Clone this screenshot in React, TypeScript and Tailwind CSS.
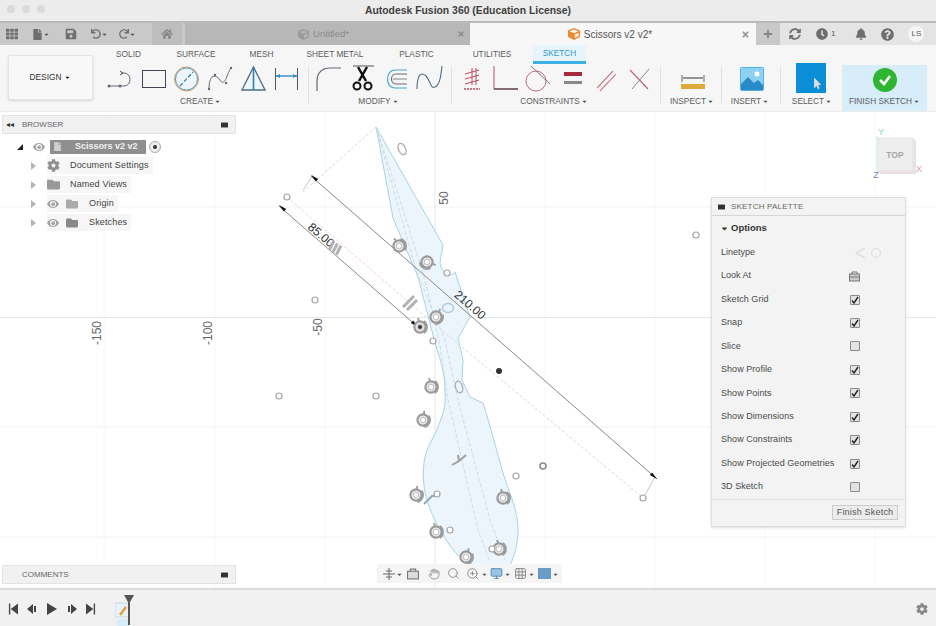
import React from "react";
import { FaTh, FaFile, FaSave, FaHome, FaPlus, FaBell, FaQuestionCircle, FaEye, FaCog, FaFolder, FaCube, FaTimes, FaMousePointer, FaClock, FaUndo, FaRedo, FaSyncAlt, FaCaretDown } from "react-icons/fa";
import { Hand, Search, ZoomIn, Monitor, Grid3x3 } from "lucide-react";

const F = "font-['Liberation_Sans',Arial,sans-serif]";
const Caret = ({ c = "text-[#555]" }: { c?: string }) => <FaCaretDown className={`inline ${c}`} size={7} />;

const I = ({ w = 28, ml = 0, children }: { w?: number; ml?: number; children: React.ReactNode }) => (
  <svg width={w} height={28} viewBox={`0 0 ${w} 28`} fill="none" className="shrink-0" style={{ marginLeft: ml }}>{children}</svg>
);

function Ring({ x, y, r = 0 }: { x: number; y: number; r?: number }) {
  return (
    <g transform={`translate(${x} ${y}) rotate(${r})`} stroke="#9a9a9a" fill="none">
      <circle r="5.6" strokeWidth="2.2" fill="#f2f2f2" />
      <circle r="2.8" strokeWidth="1.2" stroke="#c4c4c4" fill="#fff" />
      <path d="M3.8 -6.2 A7.5 7.5 0 0 1 3.8 6.2" strokeWidth="1.6" />
      <path d="M-2 -9 L-1 -6" strokeWidth="1.8" />
    </g>
  );
}
const Pt = ({ x, y, c = "#a5a5a5" }: { x: number; y: number; c?: string }) => <circle cx={x} cy={y} r="3" fill="#fff" stroke={c} strokeWidth="1.2" />;
const Arrow = ({ x, y, r }: { x: number; y: number; r: number }) => <path transform={`translate(${x} ${y}) rotate(${r})`} d="M0 0L8 -1.8L8 1.8Z" fill="#111" />;

function Canvas() {
  const outline = "M376 127 L443 245 L440 263 C442 275 452 277 455 272 L470 317 L458 338 L463 360 L462 380 L470 397 L483 403 C490 425 497 452 503 473 C510 495 518 510 518 530 C518 545 514 556 510 566 L470 566 L460 557 C450 548 435 525 428 503 C423 490 422 470 425 457 C428 445 434 437 438 427 C444 412 446 405 445 392 C445 378 443 367 435 343 L418 277 L393 218 Z";
  return (
    <svg className="absolute inset-0" width="936" height="476" viewBox="0 112 936 476">
      <g strokeWidth="1">
        {[104, 215, 325, 545, 655, 765, 875].map((x) => <path key={x} d={`M${x} 112V588`} stroke="#f8f8f8" />)}
        {[207, 427, 537].map((y) => <path key={y} d={`M0 ${y}H936`} stroke="#f3f3f3" />)}
        <path d="M435 112V588M0 317.5H936" stroke="#e6e6e6" />
      </g>
      <path d={outline} fill="#ebf5fb" stroke="#a6d4e6" strokeWidth="1" />
      <g fill="none" stroke="#c8d6dd" strokeWidth="0.8" strokeDasharray="4 2">
        <path d="M376 127 L416 270 L445 340 L458 400 L490 520 L505 560" />
        <path d="M376 127 L400 200 L425 280 L440 345 L448 400 L478 530 L490 562" />
      </g>
      <g fill="none" stroke="#d4d4d4" strokeWidth="0.9" strokeDasharray="3 2">
        <path d="M376 127 L303 192" />
        <path d="M287 197 L420 312" stroke="#f0caca" />
        <path d="M420 312 L643 498" />
      </g>
      <path d="M303 190L313 175M655 477L645 495" stroke="#c9c9c9" fill="none" />
      <g stroke="#8a8a8a" strokeWidth="1" fill="none">
        <path d="M311 176 L657 479" />
        <path d="M279 206 L418 327" />
      </g>
      <Arrow x={311} y={175} r={41} />
      <Arrow x={657} y={479} r={221} />
      <Arrow x={279} y={205} r={41} />
      <Arrow x={418} y={327} r={221} />
      <text x="321" y="239" fontSize="12" fontFamily="Liberation Sans" fill="#333" transform="rotate(41 321 235)" textAnchor="middle">85.00</text>
      <text x="470" y="309" fontSize="12" fontFamily="Liberation Sans" fill="#333" transform="rotate(41 470 305)" textAnchor="middle">210.00</text>
      {[[97, 333, "-150"], [208, 333, "-100"], [318, 327, "-50"], [444, 198, "50"]].map(([x, y, t]) => (
        <text key={String(t)} x={Number(x) + 4} y={y as number} fontSize="12" fontFamily="Liberation Sans" fill="#666" textAnchor="middle" transform={`rotate(-90 ${Number(x) + 4} ${y})`}>{t}</text>
      ))}
      <g fill="none" stroke="#adadad" strokeWidth="1.4">
        <ellipse cx="402" cy="149" rx="3.5" ry="6" transform="rotate(-25 402 149)" />
        <ellipse cx="459" cy="387" rx="3.5" ry="6" transform="rotate(-15 459 387)" />
        <ellipse cx="448" cy="308" rx="5.5" ry="4.5" stroke="#a6cde0" />
      </g>
      <g stroke="#b2b2b2" strokeWidth="3" fill="none">
        <path d="M328 246 L336 252 M331 243 L339 249 M334 240 L342 246" transform="rotate(80 334 247)" />
        <path d="M403 307 L414 296 M407 310 L417 300" />
      </g>
      <path d="M452 465 L459 461 L458 455 M459 461 L466 455" stroke="#a0a0a0" strokeWidth="2" fill="none" />
      <path d="M424 504 L432 496 L435 496" stroke="#8fa9bb" strokeWidth="2" fill="none" />
      <Ring x={399} y={246} r={-20} />
      <Ring x={427} y={262} r={120} />
      <Ring x={436} y={317} r={40} />
      <Ring x={420} y={327} r={0} />
      <circle cx="420" cy="327" r="2" fill="#333" />
      <Ring x={431} y={387} r={0} />
      <Ring x={423} y={420} r={20} />
      <Ring x={416} y={495} r={20} />
      <Ring x={503} y={498} r={0} />
      <Ring x={436} y={532} r={0} />
      <Ring x={466} y={557} r={30} />
      <Ring x={499} y={549} r={0} />
      {[[287, 197], [315, 300], [279, 396], [376, 396], [696, 235], [447, 273], [433, 341], [516, 476], [643, 498], [437, 494], [450, 530], [492, 549]].map(([x, y]) => <Pt key={`${x}-${y}`} x={x} y={y} />)}
      <circle cx="543" cy="466" r="3" fill="#fff" stroke="#888" strokeWidth="1.6" />
      <circle cx="499" cy="371" r="3" fill="#333" />
      {/* view cube */}
      <path d="M913 138L916 141V174H881L878 171H913Z" fill="#e4e4e4" />
      <path d="M878 138H913V171H878Z" fill="#eeeeee" stroke="#e4e4e4" />
      <text x="895" y="158" fontSize="8.5" fontWeight="700" fontFamily="Liberation Sans" fill="#a6a6a6" textAnchor="middle">TOP</text>
      <path d="M877 136V171" stroke="#d3efe2" strokeWidth="1.2" />
      <path d="M877 172H919" stroke="#f3dcdc" strokeWidth="1.2" />
      <text x="881" y="135" fontSize="9" fontFamily="Liberation Sans" fill="#8ad6b4" textAnchor="middle">Y</text>
      <text x="876" y="178" fontSize="9" fontFamily="Liberation Sans" fill="#6f7fd0" textAnchor="middle">Z</text>
      <text x="919" y="172" fontSize="9" fontFamily="Liberation Sans" fill="#e0a0aa" textAnchor="middle">X</text>
    </svg>
  );
}

const Grip = () => <span className="block w-[7px] h-[6px] rounded-[1px] bg-[#333] border-y border-[#999] shrink-0" />;

function TreeRow({ eye, icon, label, indent }: { eye?: boolean; icon: React.ReactNode; label: string; indent: number }) {
  return (
    <div className="flex items-center h-[19px]">
      <span className="w-0 h-0 ml-[31px] border-y-[4px] border-y-transparent border-l-[5px] border-l-[#b4b4b4]" />
      <div className="flex items-center ml-[11px] h-[17px] bg-[#f6f6f6] pr-[4px]">
        {eye ? <FaEye size={12} className="text-[#a4a4a4] mr-[7px]" /> : null}
        {icon}
        <span className="text-[9px] text-[#444] tracking-[0.15px]" style={{ marginLeft: indent }}>{label}</span>
      </div>
    </div>
  );
}

function Check({ on }: { on?: boolean }) {
  return (
    <span className="w-[10px] h-[10px] border border-[#8a8a8a] bg-[#e2e2e2] rounded-[1px] flex items-center justify-center">
      {on ? <svg width="8" height="8" viewBox="0 0 8 8"><path d="M1 4.5L3 7L7 1" stroke="#222" strokeWidth="1.4" fill="none" /></svg> : null}
    </span>
  );
}

function Palette() {
  const rows: [string, boolean][] = [["Sketch Grid", true], ["Snap", true], ["Slice", false], ["Show Profile", true], ["Show Points", true], ["Show Dimensions", true], ["Show Constraints", true], ["Show Projected Geometries", true], ["3D Sketch", false]];
  return (
    <div className="absolute left-[711px] top-[85px] w-[195px] h-[330px] bg-[#f3f3f3] border border-[#dedede] shadow-sm flex flex-col text-[#4a4a4a]">
      <div className="h-[18px] flex items-center pl-[6px] border-b border-[#d5d5d5] shrink-0">
        <Grip />
        <span className="ml-[6px] text-[8px] text-[#666] tracking-[0.2px]">SKETCH PALETTE</span>
      </div>
      <div className="h-[25px] flex items-center pl-[8px] shrink-0">
        <FaCaretDown size={9} className="text-[#333]" />
        <span className="ml-[2px] text-[9.5px] font-bold text-[#333]">Options</span>
      </div>
      <div className="flex flex-col pl-[9px]">
        <div className="h-[23.45px] flex items-center justify-between pr-[24px]">
          <span className="text-[9px]">Linetype</span>
          <span className="flex items-center gap-[5px]">
            <svg width="11" height="12" viewBox="0 0 11 12"><path d="M10 1L1 6L10 11" fill="none" stroke="#ddd" strokeWidth="1.4" /></svg>
            <span className="w-[10px] h-[10px] rounded-full border border-[#ddd]" />
          </span>
        </div>
        <div className="h-[23.45px] flex items-center justify-between pr-[45px]">
          <span className="text-[9px]">Look At</span>
          <svg width="11" height="11" viewBox="0 0 11 11"><rect x="0.5" y="3" width="10" height="7" fill="#ccc" stroke="#777" /><path d="M3 3V1H8V3M1 6H10" stroke="#777" fill="none" /></svg>
        </div>
        {rows.map(([t, on]) => (
          <div key={t} className="h-[23.45px] flex items-center justify-between pr-[45px]">
            <span className="text-[9px] tracking-[0.05px] whitespace-nowrap">{t}</span>
            <Check on={on} />
          </div>
        ))}
      </div>
      <div className="mt-auto h-[27px] border-t border-[#e2e2e2] flex items-center justify-end pr-[7px] pb-[1px]">
        <span className="h-[15px] w-[66px] border border-[#ccc] bg-[#ececec] flex items-center justify-center text-[9px] text-[#555] tracking-[0.2px]">Finish Sketch</span>
      </div>
    </div>
  );
}

function Group({ w, label, children, shift = 0 }: { w: number; label: string; children: React.ReactNode; shift?: number }) {
  return (
    <div className="flex flex-col items-center shrink-0" style={{ width: w }}>
      <div className="h-[28px] flex items-center justify-center">{children}</div>
      <div className="mt-[2px] text-[8.3px] text-[#5c5c5c] h-[12px] leading-[12px] whitespace-nowrap flex items-center gap-[1px]" style={{ marginRight: shift }}>{label}<Caret /></div>
    </div>
  );
}
const Sep = () => <div className="w-px h-[36px] mt-[2px] bg-[#e0e0e0] shrink-0" />;

function Toolbar() {
  const tabs: [string, number][] = [["SOLID", 57], ["SURFACE", 78], ["MESH", 53], ["SHEET METAL", 94], ["PLASTIC", 69], ["UTILITIES", 82]];
  return (
    <div className="h-[67px] bg-[#f6f6f6] flex shrink-0 border-b border-[#ececec]">
      <div className="w-[85px] h-[45px] ml-[8px] mt-[10px] border border-[#e4e4e4] rounded-[2px] bg-[#f8f8f8] flex items-center justify-center shadow-sm shrink-0 text-[8.3px] text-[#333]">
        <span className="flex items-center gap-[3px]">DESIGN<Caret c="text-[#222]" /></span>
      </div>
      <div className="flex flex-col ml-[7px]">
        <div className="h-[19px] flex items-center text-[8.3px] text-[#5c5c5c]">
          {tabs.map(([t, w]) => <div key={t} className="text-center shrink-0" style={{ width: w }}>{t}</div>)}
          <div className="w-[53px] h-[19px] bg-[#e8f4fb] border-b-[3px] border-[#3ab0e2] text-[#2c9ad2] flex items-center justify-center shrink-0">SKETCH</div>
        </div>
        <div className="flex h-[46px] pt-[1px]">
          <Group w={208} label="CREATE" shift={7}>
            <div className="flex items-center gap-[8px] mr-[2px]">
              <I w={27}><path d="M2 21H17C25 21 25 8 17 8H14" stroke="#667" strokeWidth="1" /><circle cx="2" cy="21" r="1.5" fill="#667" /><circle cx="13" cy="21" r="1.5" fill="#667" /><path d="M13 6L16 8L13 10" stroke="#556" /></I>
              <I w={24}><rect x="0.5" y="5.5" width="23" height="17" stroke="#445" strokeWidth="1" /></I>
              <I w={25}><circle cx="12.5" cy="14" r="12" stroke="#d59a52" strokeWidth="1" fill="#eef6fb" /><circle cx="12.5" cy="14" r="11" stroke="#5a9cc4" strokeWidth="1" /><path d="M6 21L19 7" stroke="#2f7fb5" strokeWidth="1.3" strokeDasharray="4 2" /></I>
              <I w={26}><path d="M2 24C2 10 8 8 13 15C18 23 20 8 24 3" stroke="#667" /><circle cx="2" cy="24" r="1.2" fill="#667" /><circle cx="8" cy="10" r="1.2" fill="#667" /><circle cx="19" cy="18" r="1.2" fill="#667" /><circle cx="24" cy="3" r="1.2" fill="#667" /></I>
              <I w={25}><path d="M12.5 2L24 25H1Z" stroke="#4f6d80" strokeWidth="1.3" fill="#eef6fb" /><path d="M12.5 2V25" stroke="#2d7fb4" strokeWidth="1.6" /></I>
              <I w={25}><path d="M1.5 3V25M23.5 3V25" stroke="#556" /><path d="M2 11H23" stroke="#2f8fc7" strokeWidth="1.4" /><path d="M2 11L6 9V13ZM23 11L19 9V13Z" fill="#2f8fc7" /></I>
            </div>
          </Group>
          <Sep />
          <Group w={142} label="MODIFY" shift={3}>
            <div className="flex items-center gap-[8px] mr-[2px]">
              <I w={27}><path d="M2 26V16C2 7 8 3 15 3H26" stroke="#667" strokeWidth="1.2" /></I>
              <I w={25}><path d="M3 1H24" stroke="#555" /><path d="M8 2L16 16M17 2L9 16" stroke="#111" strokeWidth="2.5" /><circle cx="7" cy="21" r="3.5" stroke="#111" strokeWidth="2" /><circle cx="18" cy="21" r="3.5" stroke="#111" strokeWidth="2" /></I>
              <I w={25}><path d="M24 5H12C2 5 2 23 12 23H24" stroke="#4aa6cf" strokeWidth="1.2" /><path d="M24 9H13C7 9 7 19 13 19H24" stroke="#667" strokeWidth="1.1" /><path d="M10 14H24" stroke="#667" strokeWidth="0.8" /></I>
              <I w={27}><path d="M1 24C1 10 5 6 10 11C15 16 14 24 19 22C24 20 25 10 26 1" stroke="#4f6d80" strokeWidth="1.1" /></I>
            </div>
          </Group>
          <Sep />
          <Group w={208} label="CONSTRAINTS" shift={4}>
            <div className="flex items-center">
              <I w={18}><path d="M9 3V20M13 3V20M16 5L2 9M16 10L2 14M16 15L2 19" stroke="#c04a5e" strokeWidth="1" /><path d="M1 24H17" stroke="#c04a5e" strokeDasharray="2 1" strokeWidth="1.6" /></I>
              <I w={27} ml={11}><path d="M2 1V24H26" stroke="#b05064" strokeWidth="1" /><path d="M2 24H26" stroke="#333" strokeWidth="1" /></I>
              <I w={26} ml={6}><circle cx="11" cy="16" r="10" stroke="#c06d7e" strokeWidth="1" /><path d="M6 1L25 19" stroke="#777" strokeWidth="1" /></I>
              <I w={18} ml={13}><rect x="0" y="7" width="18" height="4" fill="#a62a3d" /><rect x="0" y="16" width="18" height="3" fill="#888" /></I>
              <I w={20} ml={14}><path d="M1 23L17 6M4 26L20 9" stroke="#c87f8d" strokeWidth="1.1" /></I>
              <I w={21} ml={13}><path d="M1 5L19 24" stroke="#b86576" strokeWidth="1.1" /><path d="M3 24L20 4" stroke="#888" strokeWidth="1" /></I>
            </div>
          </Group>
          <Sep />
          <Group w={60} label="INSPECT" shift={-2}>
            <I w={26} ml={4}><path d="M2 10V17M24 10V17" stroke="#667" /><path d="M3 13H23" stroke="#333" /><rect x="1" y="19" width="24" height="5" fill="#dfa93c" /></I>
          </Group>
          <Sep />
          <Group w={58} label="INSERT" shift={2}>
            <svg width="24" height="24" viewBox="0 0 24 24" className="ml-[2px]"><rect width="24" height="24" rx="2" fill="#4fb2e6" /><rect x="1" y="1" width="22" height="22" fill="#8dd1f3" /><circle cx="17" cy="7" r="2.5" fill="#fff" /><path d="M1 23V17L8 10L14 16L18 13L23 18V23Z" fill="#2a89c8" /></svg>
          </Group>
          <Sep />
          <Group w={62} label="SELECT">
            <div className="w-[30px] h-[30px] -mt-[2px] mr-[2px] bg-[#0a8fd6] relative">
              <FaMousePointer size={11} className="absolute left-[16px] top-[15px] text-[#ddd]" />
            </div>
          </Group>
          <div className="w-[85px] h-[46px] ml-[-1px] bg-[#d7edf9] flex flex-col items-center shrink-0">
            <span className="mt-[3px] w-[24px] h-[24px] rounded-full bg-[#2fb52f] flex items-center justify-center">
              <svg width="14" height="12" viewBox="0 0 14 12"><path d="M2 6L6 10L12 2" stroke="#fff" strokeWidth="2.6" fill="none" /></svg>
            </span>
            <span className="mt-[3px] text-[8.3px] text-[#5c5c5c] whitespace-nowrap leading-[12px] flex items-center gap-[1px]">FINISH SKETCH<Caret /></span>
          </div>
        </div>
      </div>
    </div>
  );
}

function Nav() {
  return (
    <div className="absolute left-[377px] top-[452px] w-[185px] h-[19px] bg-[#f5f5f5] flex items-center pl-[6px]">
      <svg width="12" height="12" viewBox="0 0 12 12"><path d="M6 0V12M0 6H12M3 3H9M3 9H9" stroke="#666" /></svg>
      <span className="ml-[1px]"><Caret /></span>
      <svg className="ml-[4px]" width="12" height="12" viewBox="0 0 11 11"><rect x="0.5" y="3" width="10" height="7" fill="#ddd" stroke="#777" /><path d="M3 3V1H8V3" stroke="#777" fill="none" /></svg>
      <Hand size={12} strokeWidth={1.4} className="ml-[9px] text-[#777]" />
      <Search size={13} strokeWidth={1.4} className="ml-[7px] text-[#777]" />
      <ZoomIn size={14} strokeWidth={1.4} className="ml-[6px] text-[#777]" />
      <span className="ml-[1px]"><Caret /></span>
      <Monitor size={13} strokeWidth={1.6} className="ml-[2px] text-[#4a84b8] fill-[#9cc3e4]" />
      <span className="ml-[1px]"><Caret /></span>
      <Grid3x3 size={13} strokeWidth={1.3} className="ml-[3px] text-[#666]" />
      <span className="ml-[1px]"><Caret /></span>
      <span className="ml-[3px] w-[13px] h-[11px] bg-[#6a9ac6]" />
      <span className="ml-[1px]"><Caret /></span>
    </div>
  );
}

function Timeline() {
  const tri = "#444";
  return (
    <div className="h-[38px] bg-[#f1f1f1] border-t-2 border-[#dcdcdc] flex items-center shrink-0 relative">
      <div className="flex items-center gap-[9px] pl-[8px] mt-[1px]">
        <svg width="10" height="12" viewBox="0 0 11 12"><path d="M1 0V12H2.5V0ZM11 0V12L3 6Z" fill={tri} /></svg>
        <svg width="11" height="10" viewBox="0 0 11 10"><path d="M0 5L6 0V10ZM7 2H9V8H7Z" fill={tri} /></svg>
        <svg width="10" height="12" viewBox="0 0 10 12"><path d="M0 0L10 6L0 12Z" fill={tri} /></svg>
        <svg width="11" height="10" viewBox="0 0 11 10"><path d="M11 5L5 0V10ZM2 2H4V8H2Z" fill={tri} /></svg>
        <svg width="10" height="12" viewBox="0 0 11 12"><path d="M10 0V12H8.5V0ZM0 0V12L8 6Z" fill={tri} /></svg>
      </div>
      <div className="ml-[19px] relative w-[22px] h-[30px] mt-[3px]">
        <svg width="22" height="32" viewBox="0 0 22 32">
          <rect x="0" y="8" width="14" height="14" fill="#e8f2f8" stroke="#c9d9e2" />
          <path d="M5 20L11 12" stroke="#e2a23e" strokeWidth="2.5" />
          <rect x="2" y="24" width="12" height="8" fill="#d7eefa" />
          <path d="M9 0H19L15 7V30H13V7Z" fill="#555" />
        </svg>
      </div>
      <FaCog size={12} className="absolute right-[8px] top-[13px] text-[#888]" />
    </div>
  );
}

export default function App() {
  const c = "text-[#6e6e6e]";
  return (
    <div className={`w-[936px] h-[626px] overflow-hidden flex flex-col bg-white ${F}`}>
      <div className="h-[21px] bg-[#ececec] flex items-center justify-center relative shrink-0">
        <div className="absolute left-[7px] top-[5px] flex gap-[7px]">
          <span className="w-[8px] h-[8px] rounded-full bg-[#dadada]" />
          <span className="w-[8px] h-[8px] rounded-full bg-[#dadada]" />
          <span className="w-[8px] h-[8px] rounded-full bg-[#dadada]" />
        </div>
        <span className="text-[10.4px] font-bold text-[#3f3f3f]">Autodesk Fusion 360 (Education License)</span>
      </div>
      <div className="h-[24px] bg-[#c9c9c9] flex shrink-0 border-t-2 border-[#b9b9b9]">
        <div className="w-[152px] flex items-center pl-[6px] shrink-0">
          <FaTh size={12} className={c} />
          <span className="flex items-center ml-[14px]"><FaFile size={11} className={c} /><Caret /></span>
          <FaSave size={12} className={`ml-[15px] ${c}`} />
          <span className="flex items-center ml-[14px]"><FaUndo size={10} className={c} /><Caret /></span>
          <span className="flex items-center ml-[11px]"><FaRedo size={10} className={c} /><Caret /></span>
        </div>
        <div className="w-[30px] bg-[#bdbdbd] flex items-center justify-center shrink-0"><FaHome size={12} className="text-[#8a8a8a]" /></div>
        <div className="w-[3px] shrink-0" />
        <div className="w-[285px] bg-[#b7b7b7] flex items-center justify-center relative shrink-0">
          <FaCube size={11} className="text-[#9a9a9a] mr-[4px] -ml-[8px]" />
          <span className="text-[9.5px] text-[#8a8a8a]">Untitled*</span>
          <FaTimes size={8} className="absolute right-[5px] text-[#8a8a8a]" />
        </div>
        <div className="w-[286px] bg-[#f7f7f7] flex items-center justify-center relative shrink-0">
          <FaCube size={12} className="text-[#ee8a2d] mr-[4px] -ml-[6px]" />
          <span className="text-[10px] text-[#555]">Scissors v2 v2*</span>
          <FaTimes size={9} className="absolute right-[6px] text-[#999]" />
        </div>
        <div className="w-[24px] flex items-center justify-center shrink-0"><FaPlus size={10} className="text-[#888]" /></div>
        <div className="flex-1 bg-[#e4e4e4] flex items-center pl-[9px]">
          <FaSyncAlt size={12} className={c} />
          <FaClock size={12} className={`ml-[15px] ${c}`} />
          <span className="ml-[3px] text-[8px] text-[#555]">1</span>
          <FaBell size={12} className={`ml-[20px] ${c}`} />
          <FaQuestionCircle size={13} className={`ml-[14px] ${c}`} />
          <span className="ml-[14px] w-[16px] h-[16px] rounded-full bg-[#f5f5f5] text-[8px] flex items-center justify-center text-[#555]">LS</span>
        </div>
      </div>
      <Toolbar />
      <div className="relative h-[476px] shrink-0 bg-white">
        <Canvas />
        <div className="absolute left-[2px] top-[3px] w-[234px] h-[19px] bg-[#f1f1f1] border border-[#e3e3e3] flex items-center pl-[3px] pr-[7px]">
          <span className="text-[#333] text-[8px] leading-none">◂◂</span>
          <span className="ml-[8px] text-[8px] text-[#666]">BROWSER</span>
          <span className="ml-auto"><Grip /></span>
        </div>
        <div className="absolute left-0 top-[25px] flex flex-col">
          <div className="flex items-center h-[19px]">
            <span className="w-0 h-0 ml-[17px] border-l-[6px] border-l-transparent border-b-[6px] border-b-[#222]" />
            <FaEye size={12} className="ml-[10px] text-[#a4a4a4]" />
            <div className="ml-[5px] h-[14px] w-[96px] bg-[#8f8f8f] flex items-center pl-[3px]">
              <FaFile size={9} className="text-[#cfcfcf]" />
              <span className="ml-[13px] text-[9px] font-bold text-[#f2f2f2] whitespace-nowrap">Scissors v2 v2</span>
            </div>
            <span className="ml-[3px] w-[12px] h-[12px] rounded-full border border-[#aaa] bg-[#eee] flex items-center justify-center"><span className="w-[4px] h-[4px] rounded-full bg-[#333]" /></span>
          </div>
          <TreeRow icon={<FaCog size={13} className="text-[#8f8f8f]" />} label="Document Settings" indent={10} />
          <TreeRow icon={<FaFolder size={13} className="text-[#999]" />} label="Named Views" indent={10} />
          <TreeRow eye icon={<FaFolder size={12} className="text-[#aaa]" />} label="Origin" indent={11} />
          <TreeRow eye icon={<FaFolder size={12} className="text-[#888]" />} label="Sketches" indent={11} />
        </div>
        <Palette />
        <div className="absolute left-[2px] top-[453px] w-[234px] h-[19px] bg-[#f1f1f1] border border-[#e3e3e3] flex items-center pl-[19px] pr-[7px]">
          <span className="text-[8px] text-[#666]">COMMENTS</span>
          <span className="ml-auto"><Grip /></span>
        </div>
        <Nav />
      </div>
      <Timeline />
    </div>
  );
}
